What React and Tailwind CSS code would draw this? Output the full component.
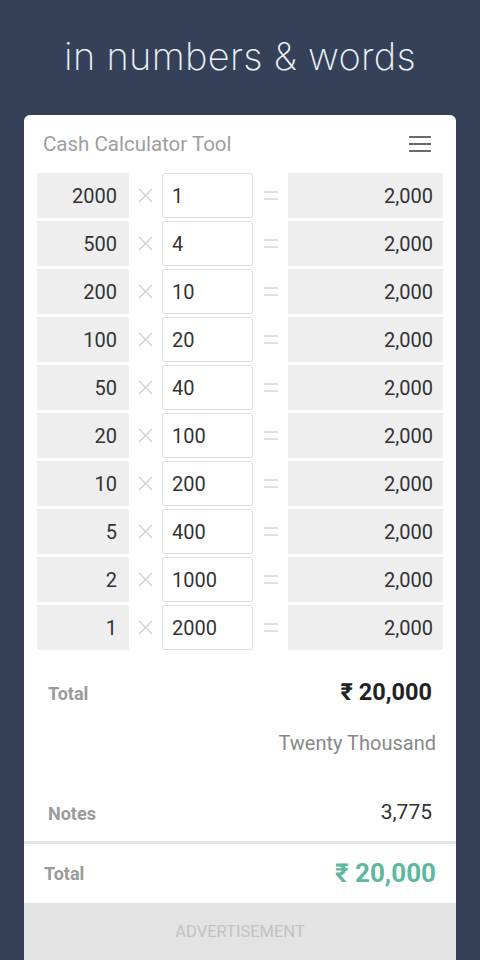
import React from 'react';

const rows = [
  ['2000', '1'],
  ['500', '4'],
  ['200', '10'],
  ['100', '20'],
  ['50', '40'],
  ['20', '100'],
  ['10', '200'],
  ['5', '400'],
  ['2', '1000'],
  ['1', '2000'],
];

function Row({ note, count }) {
  return (
    <div className="flex h-[45px] items-stretch text-[20px] text-[#333]">
      <div className="w-[92px] bg-[#eeeeee] flex items-center justify-end pr-[12px]">
        {note}
      </div>
      <div className="w-[33px] flex items-center justify-center">
        <svg width="15" height="15" viewBox="0 0 15 15">
          <path d="M1 1 L14 14 M14 1 L1 14" stroke="#d2d2d2" strokeWidth="1.4" />
        </svg>
      </div>
      <div className="w-[91px] border border-[#dcdcdc] rounded-[3px] bg-white flex items-center pl-[9px]">
        {count}
      </div>
      <div className="w-[35px] flex items-center justify-center">
        <svg width="14" height="9" viewBox="0 0 14 9">
          <path d="M0 1 H14 M0 8 H14" stroke="#d6d6d6" strokeWidth="1.6" />
        </svg>
      </div>
      <div className="flex-1 bg-[#eeeeee] flex items-center justify-end pr-[10px]">
        2,000
      </div>
    </div>
  );
}

export default function App() {
  return (
    <div
      className="w-[480px] h-[960px] overflow-hidden bg-[#344159] flex flex-col"
      style={{ fontFamily: 'Roboto, "Liberation Sans", sans-serif' }}
    >
      <div className="h-[115px] flex items-center justify-center pb-[2px]">
        <h1
          className="text-[38px] font-extralight text-[#eef1f5] tracking-[0.3px]"
          style={{ fontFamily: 'Inter, "Noto Sans", sans-serif' }}
        >
          in numbers &amp; words
        </h1>
      </div>

      <div className="mx-[24px] flex-1 bg-white rounded-t-[6px] flex flex-col overflow-hidden">
        <div className="h-[58px] flex items-center justify-between pl-[19px] pr-[25px]">
          <span className="text-[20.5px] text-[#9e9e9e]">Cash Calculator Tool</span>
          <svg width="22" height="16" viewBox="0 0 22 16">
            <rect x="0" y="0" width="22" height="2" fill="#6a6a6a" />
            <rect x="0" y="7" width="22" height="2" fill="#6a6a6a" />
            <rect x="0" y="14" width="22" height="2" fill="#6a6a6a" />
          </svg>
        </div>

        <div className="px-[13px] flex flex-col gap-[3px]">
          {rows.map(([n, c]) => (
            <Row key={n} note={n} count={c} />
          ))}
        </div>

        <div className="flex items-center justify-between h-[86px] pl-[24px] pr-[24px]">
          <span className="text-[18px] font-bold text-[#9a9a9a]">Total</span>
          <span className="text-[23.5px] font-bold text-[#222]">₹ 20,000</span>
        </div>
        <div className="flex justify-end pr-[20px] -mt-[8px] text-[20px] text-[#888]">
          Twenty Thousand
        </div>

        <div className="flex items-center justify-between pl-[24px] pr-[24px] mt-[35px] h-[40px]">
          <span className="text-[18px] font-bold text-[#9a9a9a]">Notes</span>
          <span className="text-[21px] text-[#333]">3,775</span>
        </div>

        <div className="mt-auto border-t-[3px] border-[#e6e6e6] bg-white h-[62px] flex items-center justify-between pl-[20px] pr-[20px]">
          <span className="text-[18px] font-bold text-[#9a9a9a]">Total</span>
          <span className="text-[26px] font-bold text-[#5db89f]">₹ 20,000</span>
        </div>
        <div className="h-[57px] bg-[#e3e3e3] flex items-center justify-center pt-[2px] text-[16.5px] text-[#c2c2c2]">
          ADVERTISEMENT
        </div>
      </div>
    </div>
  );
}
